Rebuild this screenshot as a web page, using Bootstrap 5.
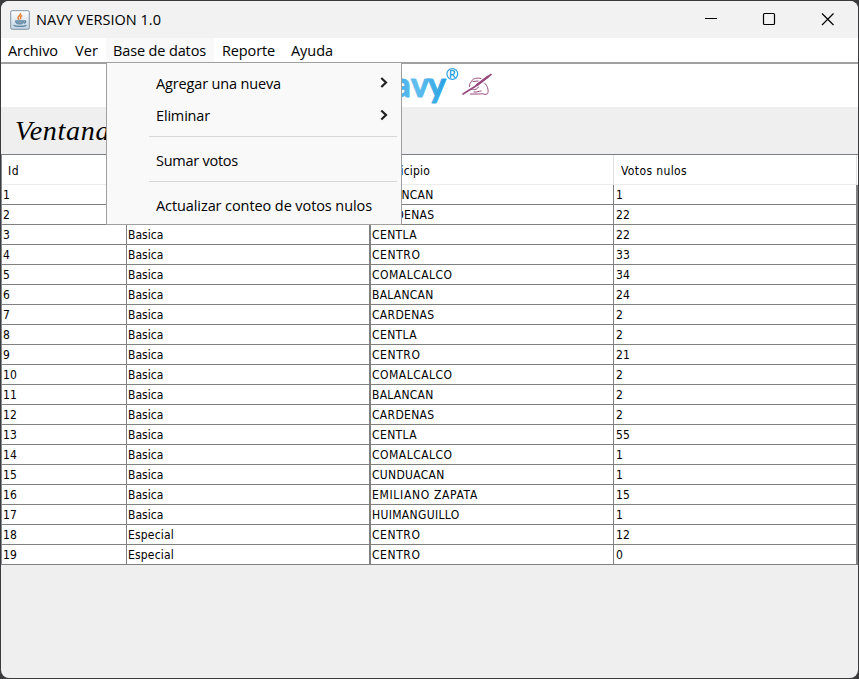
<!DOCTYPE html>
<html lang="es">
<head>
<meta charset="utf-8">
<meta name="viewport" content="width=device-width, initial-scale=1">
<title>NAVY VERSION 1.0</title>
<link href="https://cdn.jsdelivr.net/npm/bootstrap@5.3.0/dist/css/bootstrap.min.css" rel="stylesheet">
<style>
body{background:#3b3b3e;height:679px;overflow:hidden;padding:1px;color:#000}
.win{width:857px;height:677px;border-radius:8px;background:#efefef}
.titlebar{height:37px;background:#f2f2f2;font:14.5px "Open Sans","Noto Sans",sans-serif;padding-left:9px}
.titlebar .ttl{margin:0 0 0 6px}
.menubar{height:26px;background:#fff;border-bottom:2px solid #a0a0a0;font:14.5px/26px "Open Sans","Noto Sans",sans-serif}
.mi{height:24px;white-space:nowrap;padding-left:7px}
.mi.open{background:#f9f9f9}
.w1{width:67px}.w2{width:38px}.w3{width:108px}.w4{width:69px;padding-left:8px}
.w5{padding-left:8px}
.logo{height:43px;background:#fff;padding-left:384px}
.heading{height:47px;font:italic 28px/48px "Liberation Serif",serif;padding-left:14px;letter-spacing:.7px}
.grid{width:857px;border-top:1px solid #7a7f87;border-left:1px solid #828790;background:#fff;font:12px/20px "DejaVu Sans Condensed","DejaVu Sans",sans-serif}
.g-head,.g-row{display:grid;grid-template-columns:125px 244px 243px 244px}
.g-head{height:30px;border-bottom:1px solid #ececec;line-height:32px}
.g-head>div{padding-left:6px;border-right:1px solid #e2e2e2}
.g-head>div:last-child{padding-left:7px;margin-right:1px}
.g-row{height:20px}
.g-row>div{height:20px;border-right:1px solid #808080;border-bottom:1px solid #808080;padding-left:1px;line-height:20px;white-space:nowrap}
.g-row>div:nth-child(2){border-right-width:2px}
.g-row>div:nth-child(4){border-right-width:2px;padding-left:2px}
.popup{left:105px;top:61px;width:296px;height:163px;background:#f9f9f9;border:1px solid #a0a0a0;font:14.5px "Open Sans","Noto Sans",sans-serif;padding:4px 4px 0 42px}
.popup .it{height:32px;line-height:34px;padding:0 9px 0 7px;white-space:nowrap}
.popup .it.d-flex{padding-top:2px}
.popup .it svg{margin-top:-2px}
.popup .sep{height:1px;background:#d7d7d7;margin:5px 0 7px}
[data-w]{display:inline-block}
</style>
<script src="https://cdn.jsdelivr.net/npm/bootstrap@5.3.0/dist/js/bootstrap.bundle.min.js"></script>
</head>
<body>
<div class="win position-relative overflow-hidden">
  <div class="titlebar d-flex align-items-center">
    <svg width="20" height="20" viewBox="0 0 20 20"><defs><linearGradient id="j" x2="0" y2="1"><stop stop-color="#fff"/><stop offset="1" stop-color="#c3d3e2"/></linearGradient></defs><rect x=".7" y=".7" width="18.6" height="18.6" rx="1.500" fill="url(#j)" stroke="#8094a8"/><path d="M10.500 3c1 2-3 3-2.500 5 .2 1 1 1.300 1 2M12.300 5.500c-2.300 1-2.300 1.800-1.300 3.700" fill="none" stroke="#e8833a" stroke-width="1.500"/><path d="M5.500 10.700h8c0 2-.5 3-2 3.300H8c-1.700-.3-2.500-1.300-2.500-3.300z" fill="#7d9db5" stroke="#55809f" stroke-width=".8"/><path d="M3.500 15.300c3 1.500 10 1.500 13 0M13.500 11c3-.8 3 1.500.2 2.300" fill="none" stroke="#55809f" stroke-width="1.200"/></svg>
    <span class="ttl"><span data-w="125">NAVY VERSION 1.0</span></span>
    <svg class="ms-auto" width="154" height="37" fill="none" stroke="#000" stroke-width="1.200"><path d="M1 17.500h12" shape-rendering="crispEdges"/><rect x="59.500" y="12.500" width="11" height="11" rx="1"/><path d="M118 12.500l11.500 11.500M129.500 12.500L118 24"/></svg>
  </div>
  <div class="menubar d-flex">
    <div class="mi w1"><span data-w="50">Archivo</span></div>
    <div class="mi w2"><span data-w="23">Ver</span></div>
    <div class="mi w3 open"><span data-w="93">Base de datos</span></div>
    <div class="mi w4"><span data-w="53">Reporte</span></div>
    <div class="mi w5"><span data-w="42">Ayuda</span></div>
  </div>
  <div class="logo">
    <svg class="d-block" width="110" height="43">
      <defs><linearGradient id="b" gradientUnits="userSpaceOnUse" x1="14" y1="0" x2="62" y2="0"><stop stop-color="#45b0e8"/><stop offset=".35" stop-color="#62bfee"/><stop offset="1" stop-color="#27a0e2"/></linearGradient></defs>
      <text x="8.500 26 43" y="32.500" font-family="Lato,sans-serif" font-weight="700" font-size="34" fill="url(#b)" stroke="url(#b)" stroke-width="1" stroke-linejoin="round">avy</text>
      <text x="67.300" y="14" text-anchor="middle" font-family="Open Sans,sans-serif" font-weight="600" font-size="11" fill="#27a0e2">R</text>
      <circle cx="67.300" cy="10" r="5.400" fill="none" stroke="#27a0e2" stroke-width="1.200"/>
      <g fill="none" stroke="#96497f" stroke-linecap="round" stroke-linejoin="round">
        <path d="M78 30L90 22.500L106 10.500" stroke-width="1.600"/><path d="M92 21L103 12.700" stroke-width="2.300"/>
        <path d="M96 14.500c-4-1-8 0-9 2-1 1.700-3 3.500-2.500 6M88 17.500l5-.5M84 26c1.500-1 3-1 4.500-.5s4-.5 5-2.500M85.500 30h8c3 0 4.500-.7 6.500.5 1.500-.5 3-.5 3-2 .5-3-.5-6.500-3.500-9.500M89 28c3 .5 5-1 7-1" stroke-width="1"/>
      </g>
    </svg>
  </div>
  <div class="heading">Ventana</div>
  <div class="grid">
    <div class="g-head"><div><span data-w="11">Id</span></div><div></div><div><span data-w="53">Municipio</span></div><div><span data-w="66">Votos nulos</span></div></div>
    <div id="rows"></div>
  </div>
  <div class="popup position-absolute">
    <div class="it d-flex align-items-center justify-content-between"><span data-w="125">Agregar una nueva</span><svg width="8" height="12" fill="none" stroke="#222" stroke-width="2.200"><path d="M1.300 1l4.700 4.500-4.700 4.500"/></svg></div>
    <div class="it d-flex align-items-center justify-content-between"><span data-w="54">Eliminar</span><svg width="8" height="12" fill="none" stroke="#222" stroke-width="2.200"><path d="M1.300 1.500l4.700 4.500-4.700 4.500"/></svg></div>
    <div class="sep"></div>
    <div class="it"><span data-w="82">Sumar votos</span></div>
    <div class="sep"></div>
    <div class="it"><span data-w="216">Actualizar conteo de votos nulos</span></div>
  </div>
</div>
<script>
// Table data: type, municipality, null votes
const data = [['','BALANCAN',1],['','CARDENAS',22],['Basica','CENTLA',22],['Basica','CENTRO',33],['Basica','COMALCALCO',34],['Basica','BALANCAN',24],['Basica','CARDENAS',2],['Basica','CENTLA',2],['Basica','CENTRO',21],['Basica','COMALCALCO',2],['Basica','BALANCAN',2],['Basica','CARDENAS',2],['Basica','CENTLA',55],['Basica','COMALCALCO',1],['Basica','CUNDUACAN',1],['Basica','EMILIANO ZAPATA',15],['Basica','HUIMANGUILLO',1],['Especial','CENTRO',12],['Especial','CENTRO',0]];
const widths = {BALANCAN:61.5,CARDENAS:62.5,CENTLA:45,CENTRO:48.5,COMALCALCO:80.5,CUNDUACAN:72.5,'EMILIANO ZAPATA':106,HUIMANGUILLO:87.5,Basica:35.5,Especial:46};
const cell = t => t === '' ? '<div></div>' : `<div><span data-w="${widths[t] || String(t).length * 7}">${t}</span></div>`;
document.getElementById('rows').innerHTML = data.map((r, i) => `<div class="g-row">${[i + 1, ...r].map(cell).join('')}</div>`).join('');
// Tracks each label to its nominal width
document.querySelectorAll('[data-w]').forEach(e => {
  const n = e.textContent.length;
  if (n > 1) e.style.letterSpacing = (e.dataset.w - e.getBoundingClientRect().width) / n + 'px';
});
</script>
</body>
</html>
